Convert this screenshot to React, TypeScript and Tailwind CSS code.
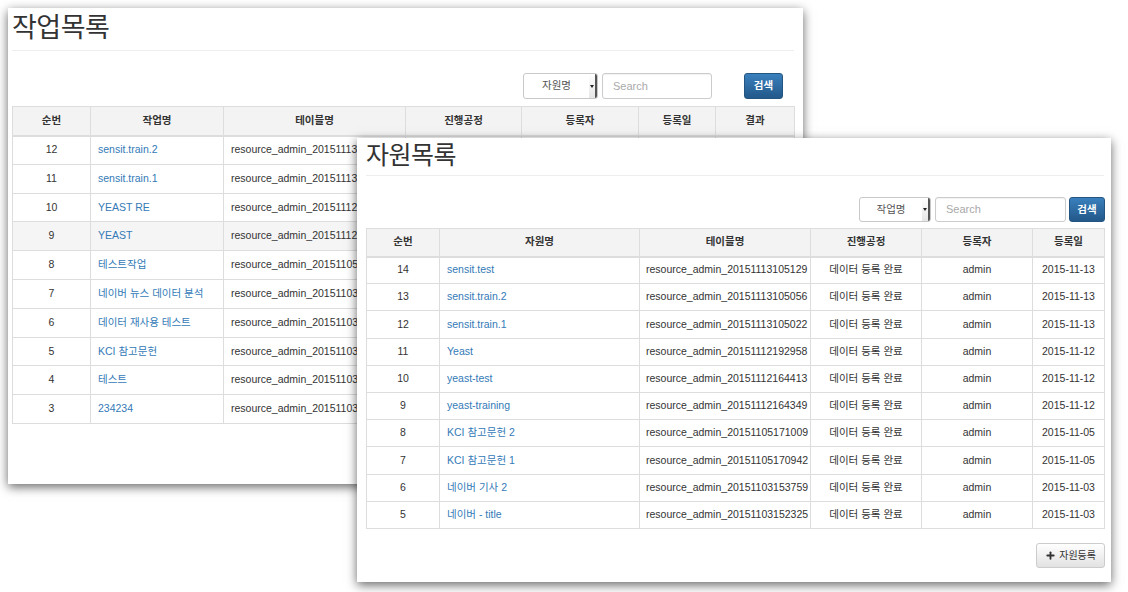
import { Plus } from 'lucide-react'

const jobs = [
  { no: 12, name: 'sensit.train.2', table: 'resource_admin_20151113105056' },
  { no: 11, name: 'sensit.train.1', table: 'resource_admin_20151113105022' },
  { no: 10, name: 'YEAST RE', table: 'resource_admin_20151112192958' },
  { no: 9, name: 'YEAST', table: 'resource_admin_20151112192958', hover: true },
  { no: 8, name: '테스트작업', table: 'resource_admin_20151105171009' },
  { no: 7, name: '네이버 뉴스 데이터 분석', table: 'resource_admin_20151103153759' },
  { no: 6, name: '데이터 재사용 테스트', table: 'resource_admin_20151103152325' },
  { no: 5, name: 'KCI 참고문헌', table: 'resource_admin_20151103140211' },
  { no: 4, name: '테스트', table: 'resource_admin_20151103135820' },
  { no: 3, name: '234234', table: 'resource_admin_20151103131507' },
]

const resources = [
  { no: 14, name: 'sensit.test', table: 'resource_admin_20151113105129', date: '2015-11-13' },
  { no: 13, name: 'sensit.train.2', table: 'resource_admin_20151113105056', date: '2015-11-13' },
  { no: 12, name: 'sensit.train.1', table: 'resource_admin_20151113105022', date: '2015-11-13' },
  { no: 11, name: 'Yeast', table: 'resource_admin_20151112192958', date: '2015-11-12' },
  { no: 10, name: 'yeast-test', table: 'resource_admin_20151112164413', date: '2015-11-12' },
  { no: 9, name: 'yeast-training', table: 'resource_admin_20151112164349', date: '2015-11-12' },
  { no: 8, name: 'KCI 참고문헌 2', table: 'resource_admin_20151105171009', date: '2015-11-05' },
  { no: 7, name: 'KCI 참고문헌 1', table: 'resource_admin_20151105170942', date: '2015-11-05' },
  { no: 6, name: '네이버 기사 2', table: 'resource_admin_20151103153759', date: '2015-11-03' },
  { no: 5, name: '네이버 - title', table: 'resource_admin_20151103152325', date: '2015-11-03' },
]

function SearchBar({ label, selectW, inputW, btnW, gap, h }: { label: string; selectW: string; inputW: string; btnW: string; gap: string; h: string }) {
  return (
    <div className={`flex justify-end items-center ${h}`}>
      {/* native-looking select */}
      <div className={`${selectW} h-full flex items-stretch border border-[#c8c8c8] rounded-[3px] bg-white`}>
        <div className="flex-1 flex items-center justify-center text-[10.5px] text-[#555]">{label}</div>
        <div className="w-[8px] flex items-center justify-center border-r-2 border-[#555] rounded-r-[2px] bg-gradient-to-b from-white to-[#e6e6e6]">
          <span className="block w-0 h-0 border-l-[2.5px] border-r-[2.5px] border-t-[3px] border-l-transparent border-r-transparent border-t-[#222]" />
        </div>
      </div>
      <div className={`${inputW} h-full ml-[4px] border border-[#ccc] rounded-[3px] bg-white flex items-center pl-[10px] text-[11px] text-[#a9a9a9] shadow-[inset_0_1px_1px_rgba(0,0,0,0.06)]`}>
        Search
      </div>
      <div className={`${btnW} ${gap} h-full rounded-[3px] border border-[#245580] bg-gradient-to-b from-[#3a80bd] to-[#23588a] text-white text-[10.5px] font-bold flex items-center justify-center`}>
        검색
      </div>
    </div>
  )
}

export default function App() {
  return (
    <div className="relative w-[1128px] h-[592px] overflow-hidden bg-white text-[#333] font-['Liberation_Sans','Noto_Sans_CJK_KR',sans-serif]">
      {/* back window: 작업목록 */}
      <div className="absolute left-[8px] top-[8px] w-[795px] h-[476px] bg-white shadow-[0_3px_10px_rgba(0,0,0,0.6)] pl-[4px] pr-[9px]">
        <div className="h-[43px] border-b border-[#eee] flex items-start pt-[3px]">
          <h1 className="text-[27px] leading-[34px] tracking-[-0.5px] text-[#333]">작업목록</h1>
        </div>
        <div className="mt-[22px] pr-[11px]">
          <SearchBar label="자원명" selectW="w-[75px]" inputW="w-[110px]" btnW="w-[39px]" gap="ml-[32px]" h="h-[26px]" />
        </div>
        <table className="mt-[7px] w-[782px] table-fixed border-collapse text-[10.5px]">
          <colgroup>
            <col className="w-[78px]" />
            <col className="w-[133px]" />
            <col className="w-[182px]" />
            <col className="w-[116px]" />
            <col className="w-[117px]" />
            <col className="w-[77px]" />
            <col className="w-[79px]" />
          </colgroup>
          <thead>
            <tr className="h-[29px] bg-[#f3f3f3]">
              {['순번', '작업명', '테이블명', '진행공정', '등록자', '등록일', '결과'].map((t) => (
                <th key={t} className="border border-[#ddd] border-b-2 font-bold text-center">{t}</th>
              ))}
            </tr>
          </thead>
          <tbody>
            {/* columns right of 테이블명 sit under the front window */}
            {jobs.map((j) => (
              <tr key={j.no} className={`h-[28.8px] ${j.hover ? 'bg-[#f5f5f5]' : ''}`}>
                <td className="border border-[#ddd] text-center">{j.no}</td>
                <td className="border border-[#ddd] px-[7px] text-[#337ab7] whitespace-nowrap overflow-hidden">{j.name}</td>
                <td className="border border-[#ddd] px-[7px] whitespace-nowrap overflow-hidden">{j.table}</td>
                <td className="border border-[#ddd]" />
                <td className="border border-[#ddd]" />
                <td className="border border-[#ddd]" />
                <td className="border border-[#ddd]" />
              </tr>
            ))}
          </tbody>
        </table>
      </div>

      {/* front window: 자원목록 */}
      <div className="absolute left-[357px] top-[138px] w-[754px] h-[444px] bg-white shadow-[0_3px_10px_rgba(0,0,0,0.6)] pl-[9px] pr-[7px]">
        <div className="h-[38px] border-b border-[#eee] flex items-start pt-[1px]">
          <h1 className="text-[25px] leading-[32px] tracking-[-0.5px] text-[#333]">자원목록</h1>
        </div>
        <div className="mt-[21px] -mr-[1px]">
          <SearchBar label="작업명" selectW="w-[72px]" inputW="w-[131px]" btnW="w-[36px]" gap="ml-[3px]" h="h-[25px]" />
        </div>
        <table className="mt-[6px] w-[738px] table-fixed border-collapse text-[10.5px]">
          <colgroup>
            <col className="w-[73px]" />
            <col className="w-[200px]" />
            <col className="w-[171px]" />
            <col className="w-[111px]" />
            <col className="w-[111px]" />
            <col className="w-[72px]" />
          </colgroup>
          <thead>
            <tr className="h-[28px] bg-[#f3f3f3]">
              {['순번', '자원명', '테이블명', '진행공정', '등록자', '등록일'].map((t) => (
                <th key={t} className="border border-[#ddd] border-b-2 font-bold text-center">{t}</th>
              ))}
            </tr>
          </thead>
          <tbody>
            {resources.map((r) => (
              <tr key={r.no} className="h-[27.2px]">
                <td className="border border-[#ddd] text-center">{r.no}</td>
                <td className="border border-[#ddd] px-[7px] text-[#337ab7]">{r.name}</td>
                <td className="border border-[#ddd] px-[6px] whitespace-nowrap">{r.table}</td>
                <td className="border border-[#ddd] text-center">데이터 등록 완료</td>
                <td className="border border-[#ddd] text-center">admin</td>
                <td className="border border-[#ddd] text-center">{r.date}</td>
              </tr>
            ))}
          </tbody>
        </table>
        <div className="mt-[14px] flex justify-end -mr-[1px]">
          <div className="h-[25px] px-[8px] flex items-center gap-[3px] border border-[#ccc] rounded-[3px] bg-gradient-to-b from-white to-[#e2e2e2] text-[10px] text-[#333]">
            <Plus className="w-[11px] h-[11px]" strokeWidth={4} />
            자원등록
          </div>
        </div>
      </div>
    </div>
  )
}
